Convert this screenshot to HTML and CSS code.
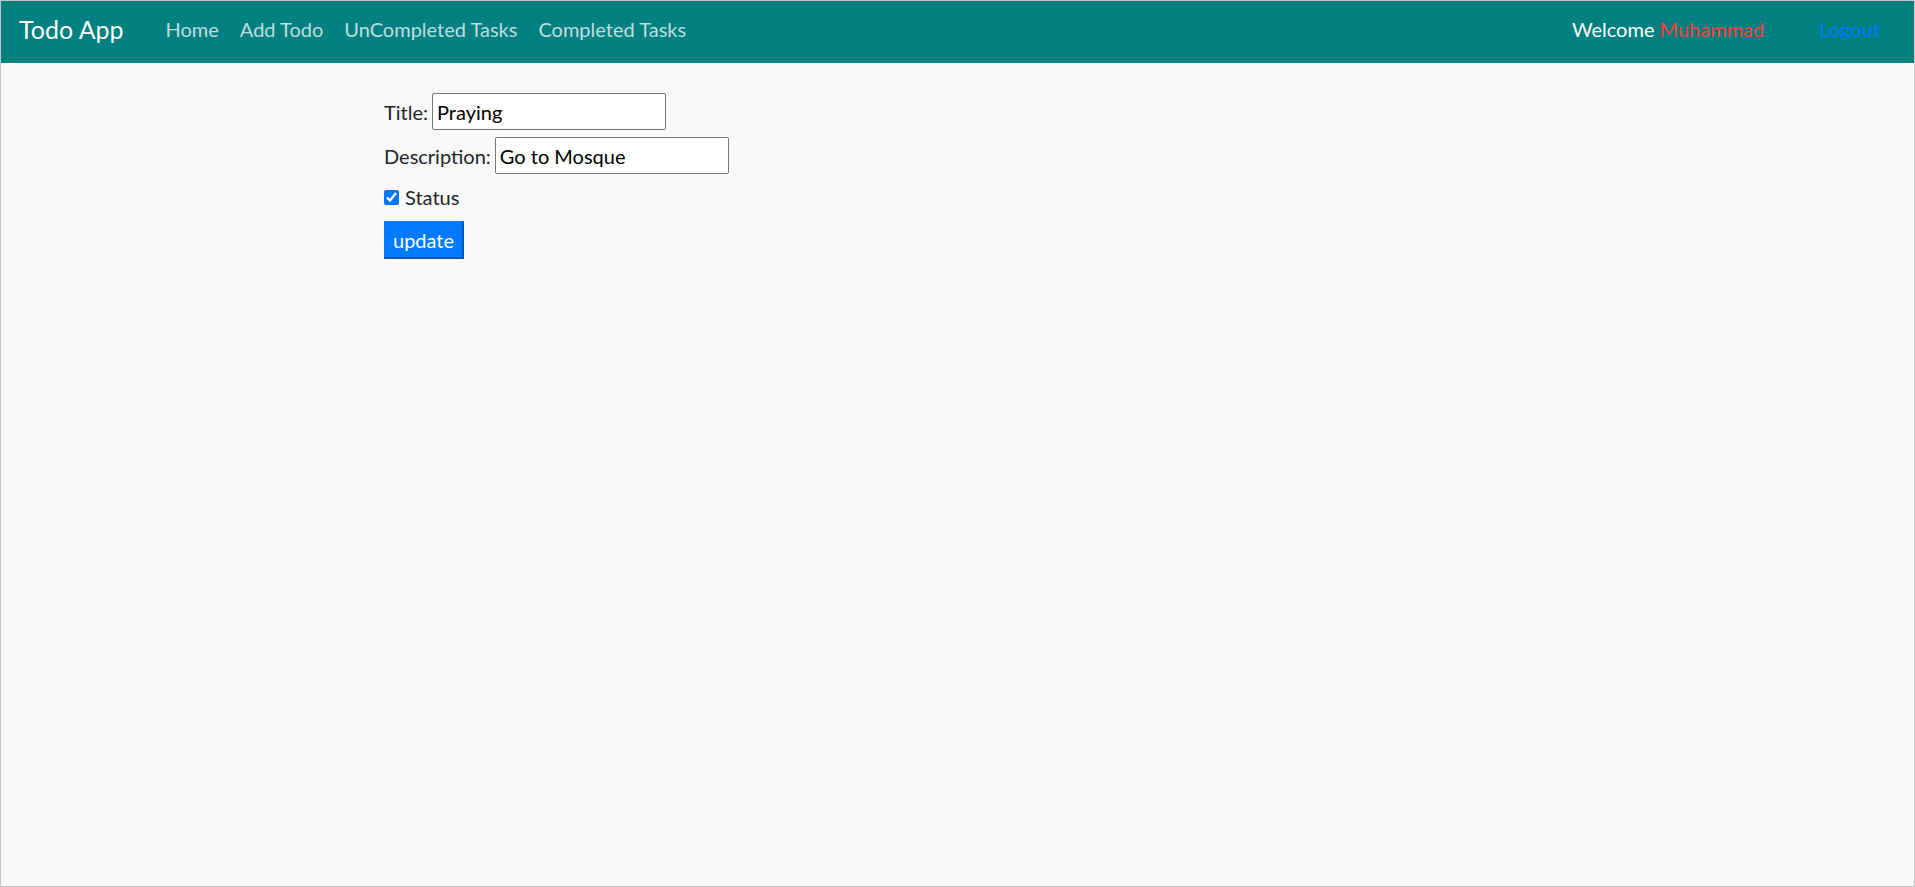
FILE: index.html
```html
<!DOCTYPE html>
<html lang="en">
<head>
<meta charset="utf-8">
<title>Todo App</title>
<link rel="stylesheet" href="styles.css">
</head>
<body>
<div class="frame">
  <nav class="navbar">
    <a class="brand" href="#">Todo App</a>
    <ul class="nav-links">
      <li><a href="#">Home</a></li>
      <li><a href="#">Add Todo</a></li>
      <li><a href="#">UnCompleted Tasks</a></li>
      <li><a href="#">Completed Tasks</a></li>
    </ul>
    <div class="nav-right">
      <span class="welcome">Welcome <span class="user">Muhammad</span></span>
      <a class="logout" href="#">Logout</a>
    </div>
  </nav>
  <main class="content">
    <form class="todo-form">
      <div class="row">
        <label for="title">Title:</label>
        <input id="title" class="field" type="text" value="Praying">
      </div>
      <div class="row">
        <label for="desc">Description:</label>
        <input id="desc" class="field" type="text" value="Go to Mosque">
      </div>
      <div class="row check-row">
        <input id="status" class="check" type="checkbox" checked>
        <label for="status">Status</label>
      </div>
      <button type="button" class="btn">update</button>
    </form>
  </main>
</div>
</body>
</html>
```

FILE: styles.css
```css
* { box-sizing: border-box; }
html, body { margin: 0; padding: 0; }
body {
  font-family: "Lato", "Open Sans", sans-serif;
  font-size: 20px;
  color: #212529;
  background: #f9f9f9;
}
.frame {
  height: 887px;
  border: 1px solid #c4c4c4;
  background: #f9f9f9;
  display: flex;
  flex-direction: column;
}
.navbar {
  height: 62px;
  flex: none;
  background: #008080;
  display: flex;
  align-items: center;
  padding: 0 34px 0 18px;
}
.brand {
  font-size: 25px;
  color: #fff;
  text-decoration: none;
  margin-right: 42px;
  padding-bottom: 6px;
}
.nav-links {
  list-style: none;
  margin: 0;
  padding: 0;
  display: flex;
  gap: 21px;
  padding-bottom: 6px;
}
.nav-links a {
  color: rgba(255, 255, 255, 0.75);
  text-decoration: none;
}
.nav-right {
  margin-left: auto;
  display: flex;
  align-items: center;
  gap: 55px;
  padding-bottom: 6px;
}
.welcome { color: #fff; }
.user { color: #ff3b3b; }
.logout { color: #007bff; text-decoration: none; }
.content {
  padding: 30px 0 0 383px;
}
.row {
  display: flex;
  align-items: center;
  gap: 4px;
  margin-bottom: 7px;
}
.field {
  width: 234px;
  height: 37px;
  border: 1px solid #767676;
  border-radius: 2px;
  background: #fff;
  font: inherit;
  color: #000;
  padding: 0 4px;
}
.check-row {
  height: 30px;
  margin-top: 8px;
  margin-bottom: 9px;
  gap: 6px;
}
.check {
  width: 15px;
  height: 15px;
  margin: 0;
  accent-color: #0075ff;
}
.btn {
  font: inherit;
  color: #fff;
  background: #007bff;
  border-style: solid;
  border-width: 1px 2px 2px 1px;
  border-color: #007bff #0058b8 #0058b8 #007bff;
  height: 38px;
  padding: 0 8px;
  cursor: pointer;
}
```
